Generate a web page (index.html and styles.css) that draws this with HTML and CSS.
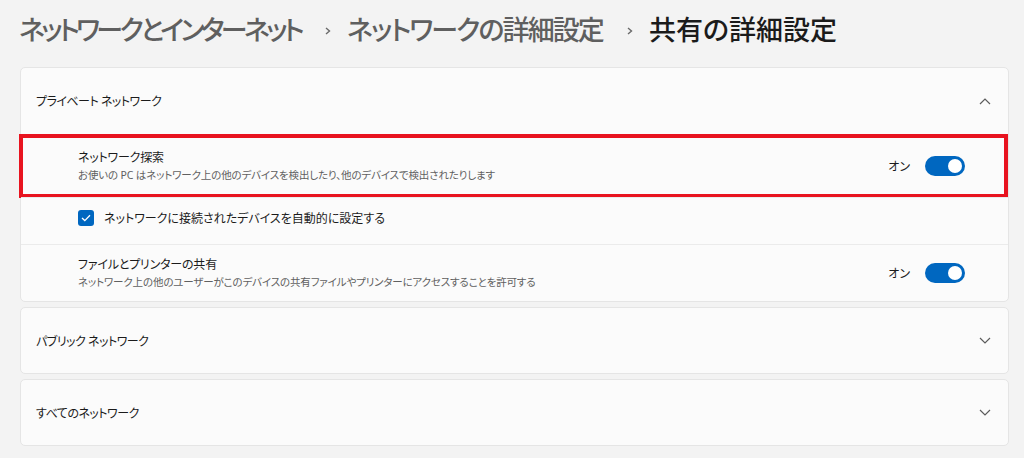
FILE: index.html
```html
<!DOCTYPE html>
<html lang="ja">
<head>
<meta charset="utf-8">
<title>共有の詳細設定</title>
<link rel="stylesheet" href="styles.css">
</head>
<body>
<header class="crumbs">
  <span class="crumb c1">ネットワークとインターネット</span>
  <svg class="sep" width="6" height="8" viewBox="0 0 6 8"><polyline points="1,1 4.5,4 1,7" fill="none" stroke="#6a6a6a" stroke-width="1.4"/></svg>
  <span class="crumb c2">ネットワークの詳細設定</span>
  <svg class="sep" width="6" height="8" viewBox="0 0 6 8"><polyline points="1,1 4.5,4 1,7" fill="none" stroke="#6a6a6a" stroke-width="1.4"/></svg>
  <span class="crumb current">共有の詳細設定</span>
</header>
<main class="cards">
  <section class="card">
    <div class="exp-head">
      <span class="exp-title">プライベート ネットワーク</span>
      <svg class="chev" width="12" height="7" viewBox="0 0 12 7"><polyline points="1,6 6,1 11,6" fill="none" stroke="#5c5c5c" stroke-width="1.2"/></svg>
    </div>
    <div class="row setting marked">
      <div class="texts">
        <div class="title">ネットワーク探索</div>
        <div class="desc">お使いの PC はネットワーク上の他のデバイスを検出したり、他のデバイスで検出されたりします</div>
      </div>
      <div class="ctrl"><span class="state">オン</span><span class="toggle"><span class="knob"></span></span></div>
      <div class="highlight"></div>
    </div>
    <div class="row check">
      <span class="box"><svg width="10" height="8" viewBox="0 0 10 8"><polyline points="1,4 3.8,6.6 9,1.2" fill="none" stroke="#fff" stroke-width="1.3"/></svg></span>
      <span class="check-label">ネットワークに接続されたデバイスを自動的に設定する</span>
    </div>
    <div class="row setting last">
      <div class="texts">
        <div class="title">ファイルとプリンターの共有</div>
        <div class="desc">ネットワーク上の他のユーザーがこのデバイスの共有ファイルやプリンターにアクセスすることを許可する</div>
      </div>
      <div class="ctrl"><span class="state">オン</span><span class="toggle"><span class="knob"></span></span></div>
    </div>
  </section>
  <section class="card">
    <div class="exp-head closed">
      <span class="exp-title">パブリック ネットワーク</span>
      <svg class="chev" width="12" height="7" viewBox="0 0 12 7"><polyline points="1,1 6,6 11,1" fill="none" stroke="#5c5c5c" stroke-width="1.2"/></svg>
    </div>
  </section>
  <section class="card">
    <div class="exp-head closed">
      <span class="exp-title">すべてのネットワーク</span>
      <svg class="chev" width="12" height="7" viewBox="0 0 12 7"><polyline points="1,1 6,6 11,1" fill="none" stroke="#5c5c5c" stroke-width="1.2"/></svg>
    </div>
  </section>
</main>
</body>
</html>
```
FILE: styles.css
```css
* { box-sizing: border-box; }
html, body { margin: 0; padding: 0; }
body {
  background: #f3f3f3;
  font-family: "Noto Sans", "Noto Sans CJK JP", sans-serif;
  font-feature-settings: "palt";
  color: #1b1b1b;
  width: 1024px;
  height: 458px;
  overflow: hidden;
}
.crumbs {
  display: flex;
  align-items: center;
  height: 67px;
  padding: 0 0 7px 19px;
  font-size: 27px;
  font-weight: 500;
  line-height: 36px;
}
.crumb { color: #5f5f5f; }
.crumb.c1 { letter-spacing: -3.6px; }
.crumb.c2 { letter-spacing: -1.9px; }
.crumb.current { color: #1b1b1b; }
.sep { margin: 2px 16px 0 24px; }
.cards {
  display: flex;
  flex-direction: column;
  gap: 5px;
  margin: 0 15px 0 20px;
}
.card {
  background: #fbfbfb;
  border: 1px solid #e5e5e5;
  border-radius: 5px;
}
.exp-head {
  display: flex;
  align-items: center;
  justify-content: space-between;
  height: 66px;
  padding: 0 17px 0 15px;
}
.exp-head.closed { height: 65px; }
.exp-title { font-size: 12px; letter-spacing: -0.5px; color: #1b1b1b; }
.row {
  position: relative;
  display: flex;
  align-items: center;
  border-top: 1px solid #ebebeb;
  padding: 0 43px 0 57px;
}
.setting { height: 63px; }
.setting.last { height: 57px; }
.texts { flex: 1; }
.title { font-size: 12px; letter-spacing: -0.2px; line-height: 18px; }
.desc { font-size: 10.5px; letter-spacing: -0.15px; line-height: 16px; color: #606060; }
.ctrl { display: flex; align-items: center; gap: 15px; }
.state { font-size: 12px; }
.toggle {
  width: 40px;
  height: 20px;
  border-radius: 10px;
  background: #0067c0;
  display: flex;
  align-items: center;
  justify-content: flex-end;
  padding-right: 3px;
}
.knob { width: 14px; height: 14px; border-radius: 50%; background: #fff; }
.check { height: 47px; gap: 10px; padding-bottom: 7px; }
.box {
  width: 16px; height: 16px; border-radius: 3px;
  background: #0067c0;
  display: flex; align-items: center; justify-content: center;
}
.check-label { font-size: 12px; }
.highlight {
  position: absolute;
  left: -2px; right: 0; top: -1px; bottom: -1px;
  border: 4px solid #e8131f;
  pointer-events: none;
}
```
